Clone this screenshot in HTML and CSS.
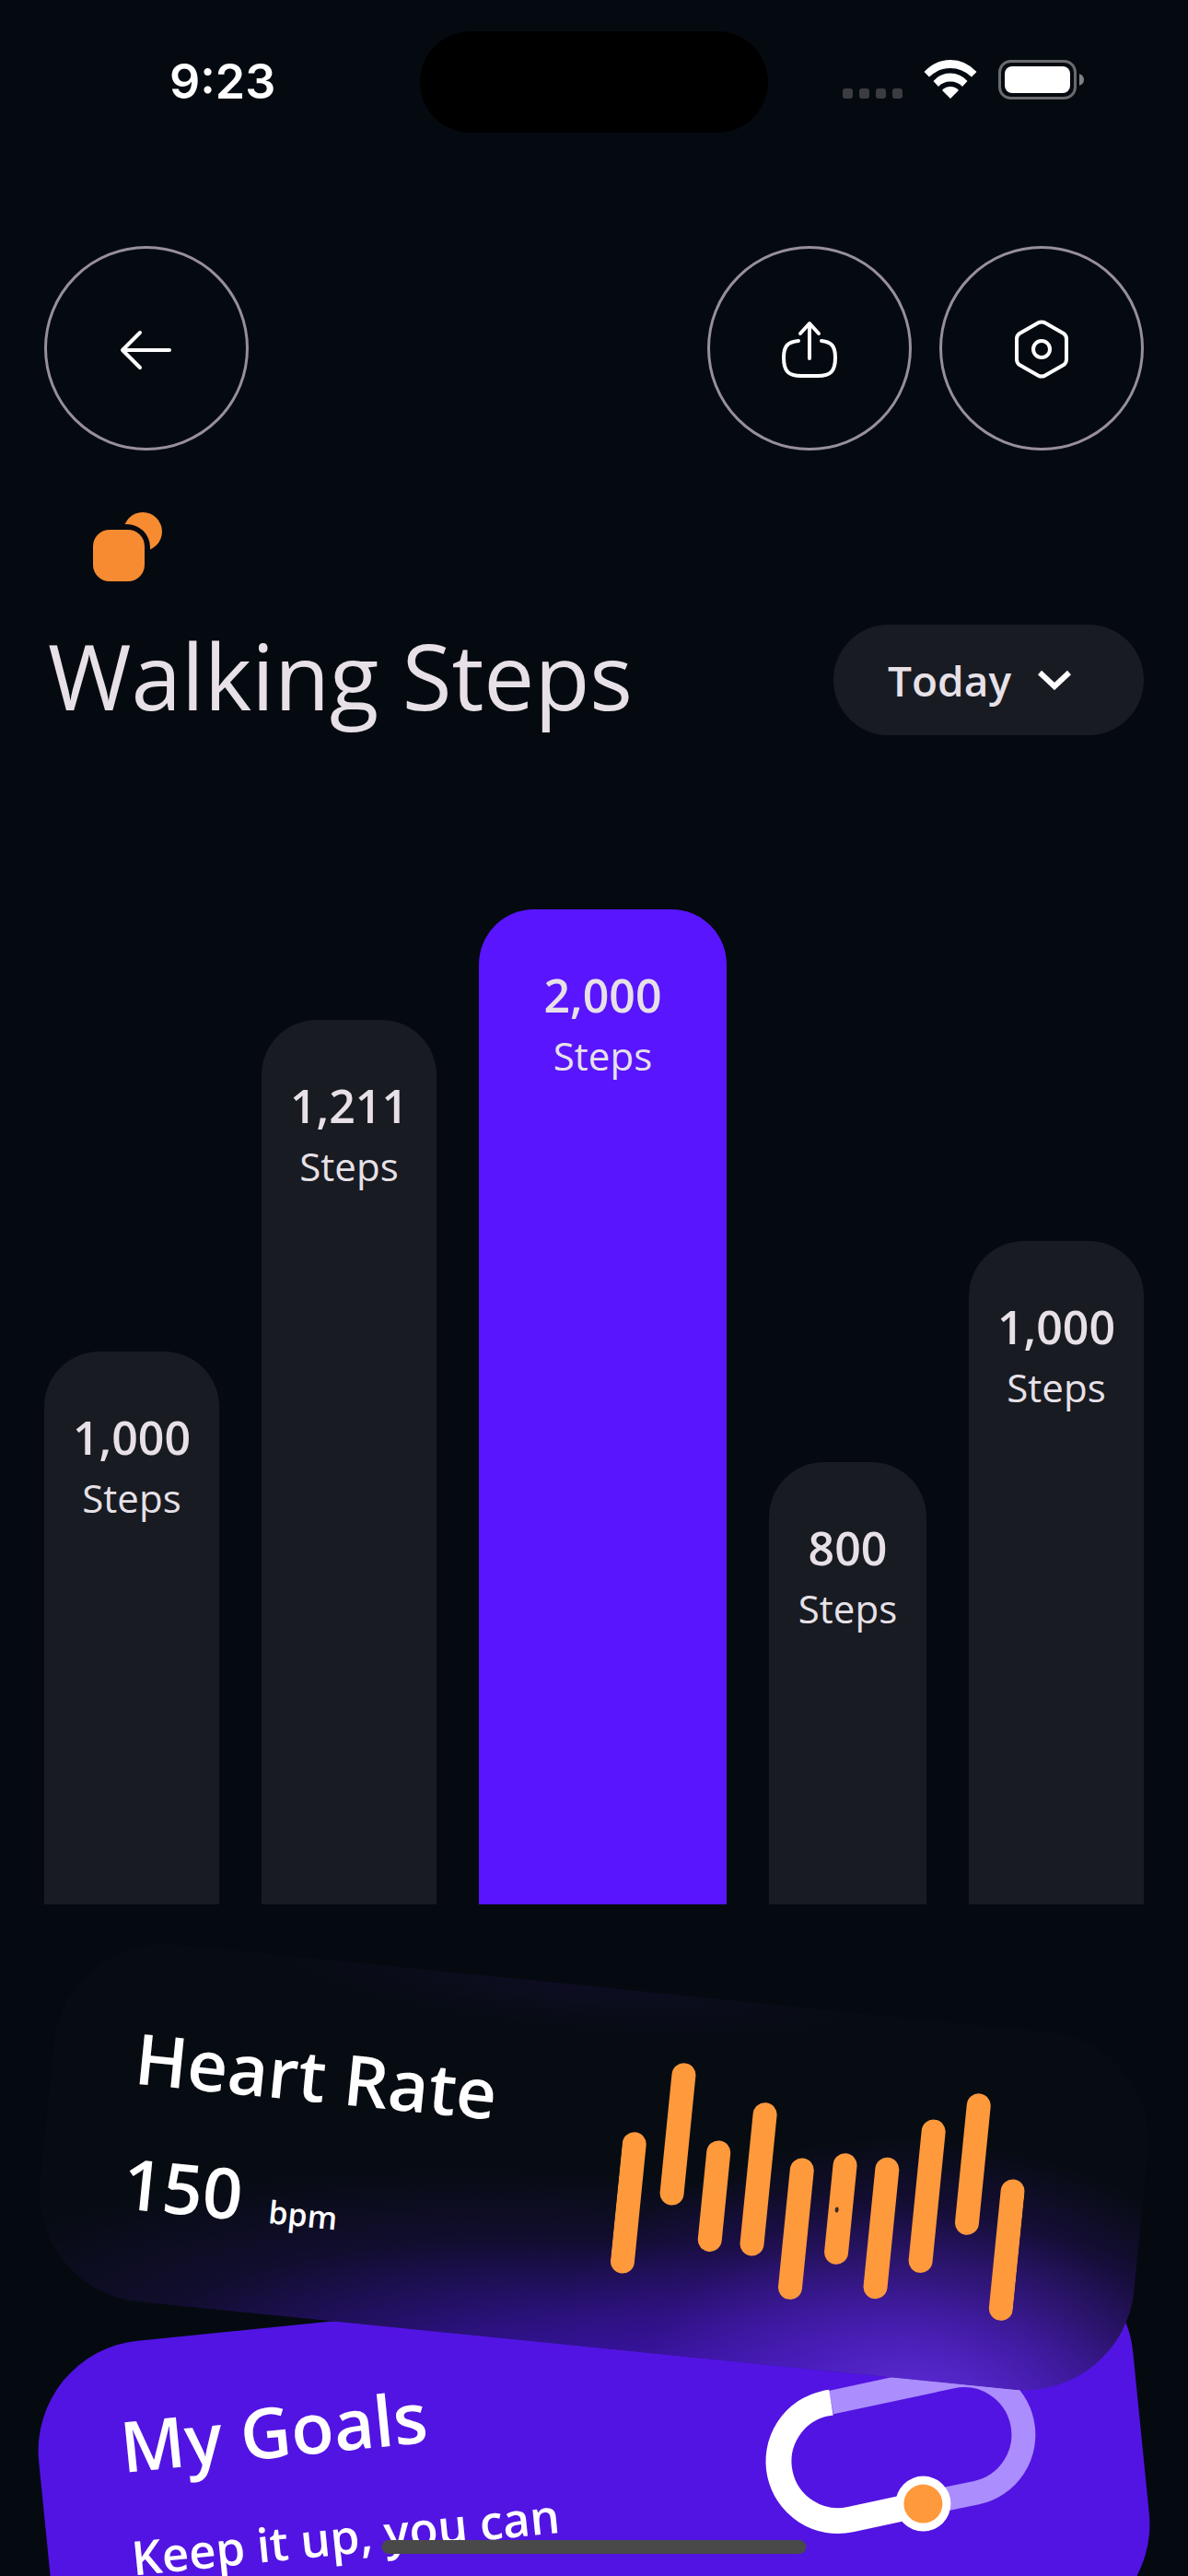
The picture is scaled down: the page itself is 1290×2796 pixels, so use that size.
FILE: index.html
```html
<!DOCTYPE html>
<html lang="en">
<head>
<meta charset="utf-8">
<meta name="viewport" content="width=device-width, initial-scale=1">
<title>Walking Steps</title>
<link rel="stylesheet" href="styles.css">
</head>
<body>
<div class="app">
  <div class="status">
    <time class="status-time">9:23</time>
    <div class="island"></div>
    <div class="status-icons">
      <svg class="icon-signal" viewBox="0 0 65 42" aria-hidden="true"><g fill="#3a3c41"><rect x="0" y="31" width="11" height="11" rx="3"/><rect x="18" y="31" width="11" height="11" rx="3"/><rect x="36" y="31" width="11" height="11" rx="3"/><rect x="54" y="31" width="11" height="11" rx="3"/></g></svg>
      <svg class="icon-wifi" viewBox="0 0 58 42" aria-hidden="true"><g fill="#fff"><path d="M0.500 13Q12.500 0 29 0T57.500 13L52 18.500Q42 9 29 9T6 18.500Z"/><path d="M10.500 23Q18 14.500 29 14.500T47.500 23L42 29Q37 23.500 29 23.500T16 29Z"/><path d="M20 33Q23.500 29 29 29T38 33L29 42Z"/></g></svg>
      <svg class="icon-battery" viewBox="0 0 93 43" aria-hidden="true"><rect x="1.500" y="1.500" width="82" height="40" rx="12" fill="none" stroke="#696b6f" stroke-width="3"/><rect x="7" y="7" width="71" height="29" rx="8" fill="#fff"/><path d="M88 15q5 2 5 6.500t-5 6.500z" fill="#808286"/></svg>
    </div>
  </div>

  <main class="content">
    <header class="toolbar">
      <button class="round-btn" type="button" aria-label="Back"><svg viewBox="0 0 72 72"><path d="M61 38H10M29 19L10 38l19 19"/></svg></button>
      <div class="toolbar-group">
        <button class="round-btn" type="button" aria-label="Share"><svg viewBox="0 0 72 72"><path d="M36 47V10M26 20L36 9l10 11M24 28C12 29 8 34 8 46c0 15 5 20 19 20h18c14 0 19-5 19-20 0-12-4-17-15-18"/></svg></button>
        <button class="round-btn" type="button" aria-label="Settings"><svg viewBox="0 0 72 72"><path d="M33 8q3-1 6 0l21 12q3 2 3 6v22q0 4-3 6L39 66q-3 1-6 0L12 54q-3-2-3-6V26q0-4 3-6z"/><circle cx="36" cy="37" r="9"/></svg></button>
      </div>
    </header>

    <svg class="logo" viewBox="0 0 76 76" aria-hidden="true"><circle cx="55" cy="21" r="21" fill="#f68b31"/><rect x="-6" y="13" width="69" height="69" rx="25" fill="#050a11"/><rect x="1" y="19" width="56" height="56" rx="18" fill="#f68b31"/></svg>

    <div class="title-row">
      <h1 class="title">Walking Steps</h1>
      <div class="period">
        <select class="period-select" aria-label="Period"><option>Today</option></select>
        <svg class="period-arrow" viewBox="0 0 36 22" aria-hidden="true"><path d="M2 3l16 15L34 3"/></svg>
      </div>
    </div>

    <ul class="chart">
      <li class="bar" style="height:600px"><strong>1,000</strong><span>Steps</span></li>
      <li class="bar" style="height:960px"><strong>1,211</strong><span>Steps</span></li>
      <li class="bar bar-active" style="height:1080px"><strong>2,000</strong><span>Steps</span></li>
      <li class="bar bar-narrow" style="height:480px"><strong>800</strong><span>Steps</span></li>
      <li class="bar" style="height:720px"><strong>1,000</strong><span>Steps</span></li>
    </ul>

    <section class="card card-heart">
      <div class="card-text">
        <h2 class="card-title">Heart Rate</h2>
        <p class="rate"><strong>150</strong><span>bpm</span></p>
      </div>
      <svg class="pulse" viewBox="0 0 440 244" aria-hidden="true">
        <g stroke="#fe993c" stroke-width="26" stroke-linecap="round">
          <path d="M13 93V221M59 13V142M105 93V188M151 47V188M197 103V231M243 93V188M289 93V221M335 47V188M381 14V142M427 103V231"/>
        </g>
        <ellipse cx="239" cy="142" rx="2" ry="3" fill="#3c2c2a"/>
      </svg>
    </section>

    <section class="card card-goals">
      <div class="card-text">
        <h2 class="card-title">My Goals</h2>
        <p class="goal">Keep it up, you can</p>
      </div>
      <svg class="track" viewBox="0 0 300 220" aria-hidden="true">
        <g transform="rotate(5.73 150 110)">
          <path d="M75 60L206 32A64 64 0 0 1 233 158L175 170" fill="none" stroke="#ab8dfd" stroke-width="26"/>
          <path d="M75 60L69 61A64 64 0 0 0 96 187L175 170" fill="none" stroke="#fff" stroke-width="28"/>
          <circle cx="175" cy="170" r="30" fill="#fff"/>
          <circle cx="175" cy="170" r="21" fill="#fe993c"/>
        </g>
      </svg>
    </section>
  </main>
  <div class="home-indicator"></div>
</div>
</body>
</html>
```
FILE: styles.css
```css
* { box-sizing: border-box; }

body {
  margin: 0;
  background: #050a11;
  color: #e7e1e7;
  font-family: "Open Sans", "Noto Sans", sans-serif;
}

h1, h2, p, ul { margin: 0; padding: 0; }

.app {
  position: relative;
  display: flex;
  flex-direction: column;
  height: 100vh;
  overflow: hidden;
}

/* Status bar */
.status {
  flex: none;
  display: grid;
  grid-template-columns: 1fr 378px 1fr;
  align-items: center;
  height: 177px;
}
.status-time {
  padding-left: 184px;
  color: #fff;
  font: 600 52px/72px Inter, sans-serif;
}
.island { height: 110px; border-radius: 55px; background: #000; }
.status-icons {
  display: flex;
  justify-content: flex-end;
  gap: 23px;
  padding: 0 113px 4px 0;
}
.icon-signal { width: 65px; height: 42px; }
.icon-wifi { width: 58px; height: 42px; }
.icon-battery { width: 93px; height: 43px; }

/* Scrolling content */
.content {
  flex: 1;
  min-height: 0;
  padding: 90px 48px 48px;
  overflow: hidden auto;
  scrollbar-width: none;
}

.toolbar { display: flex; justify-content: space-between; }
.toolbar-group { display: flex; gap: 30px; }
.round-btn {
  display: grid;
  place-items: center;
  width: 222px;
  height: 222px;
  padding: 0;
  border: 3px solid #978f9b;
  border-radius: 50%;
  background: none;
}
.round-btn svg {
  width: 72px;
  height: 72px;
  fill: none;
  stroke: #fff;
  stroke-width: 4;
  stroke-linecap: round;
  stroke-linejoin: round;
}

.logo { display: block; width: 76px; height: 76px; margin: 67px 52px 46px; }

.title-row { display: flex; align-items: center; justify-content: space-between; }
.title {
  padding: 0 0 10px 4px;
  font-size: 98px;
  line-height: 108px;
  font-weight: 400;
}

.period { position: relative; }
.period-select {
  display: block;
  width: 337px;
  height: 120px;
  padding: 0 59px;
  border: 0;
  border-radius: 60px;
  background: #181b22;
  color: inherit;
  font: 600 46px/66px "Open Sans", "Noto Sans", sans-serif;
  appearance: none;
}
.period-arrow {
  position: absolute;
  top: 49px;
  right: 79px;
  width: 36px;
  height: 22px;
  fill: none;
  stroke: #fff;
  stroke-width: 6;
  pointer-events: none;
}

/* Chart */
.chart {
  display: flex;
  align-items: flex-end;
  gap: 46px;
  margin-top: 189px;
  list-style: none;
}
.bar {
  flex: 190 1 0;
  display: flex;
  flex-direction: column;
  align-items: center;
  padding-top: 60px;
  border-radius: 60px 60px 0 0;
  background: #181b22;
  line-height: 66px;
}
.bar strong { font-size: 50px; font-weight: 600; }
.bar span { font-size: 42px; font-weight: 400; }
.bar-active { flex-grow: 269; background: #5915fd; }
.bar-narrow { flex-grow: 171; }

/* Cards */
.card {
  position: relative;
  display: flex;
  justify-content: space-between;
  border-radius: 120px;
  color: #fff;
}
.card-title { font-size: 76px; line-height: 96px; font-weight: 600; }
.card-text { padding-left: 90px; white-space: nowrap; }

.card-heart {
  z-index: 1;
  height: 390px;
  margin-top: 90px;
  padding: 78px 129px 0 0;
  background:
    radial-gradient(ellipse 420px 310px at 82% 112%, rgba(98, 48, 224, 0.95) 0%, rgba(84, 34, 205, 0.7) 35%, rgba(58, 18, 150, 0.28) 75%, transparent 100%),
    radial-gradient(ellipse 860px 240px at 62% 112%, rgba(68, 20, 200, 0.95) 0%, rgba(60, 20, 175, 0.7) 35%, rgba(40, 16, 110, 0.3) 70%, transparent 100%),
    radial-gradient(ellipse 320px 50px at 46% 0%, #0e0d23 0%, transparent 100%),
    #070c12;
  transform: rotate(0.1rad);
}
.rate {
  display: flex;
  align-items: baseline;
  gap: 30px;
  margin-top: 40px;
  line-height: 96px;
}
.rate strong { font-size: 76px; font-weight: 600; }
.rate span { font-size: 34px; font-weight: 600; }
.pulse { flex: none; width: 440px; height: 244px; margin-top: -5px; }

.card-goals {
  height: 416px;
  margin-top: -55px;
  padding: 64px 112px 0 0;
  background: #5214e2;
  transform: rotate(-0.1rad);
}
.goal { margin-top: 36px; font-size: 51px; line-height: 75px; font-weight: 600; }
.track { flex: none; width: 300px; height: 220px; margin-top: 25px; overflow: visible; }

.home-indicator {
  position: absolute;
  bottom: 24px;
  left: 50%;
  z-index: 2;
  width: 461px;
  height: 15px;
  border-radius: 8px;
  background: #494949;
  transform: translateX(-50%);
}
```
